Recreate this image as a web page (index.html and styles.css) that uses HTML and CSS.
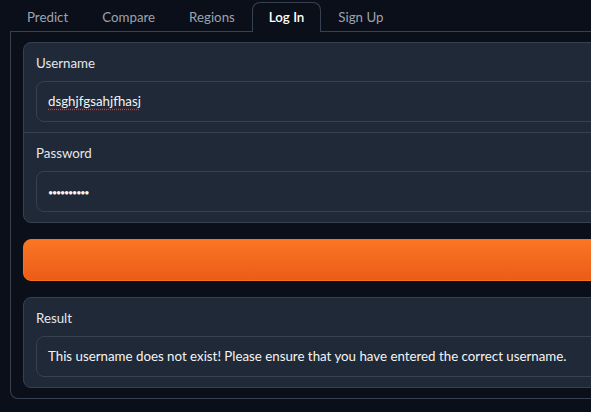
FILE: index.html
```html
<!DOCTYPE html>
<html lang="en">
<head>
<meta charset="utf-8">
<title>Log In</title>
<link rel="stylesheet" href="styles.css">
</head>
<body>
<div class="app">
  <div class="tabs">
    <nav class="tab-nav">
      <button class="tab">Predict</button>
      <button class="tab">Compare</button>
      <button class="tab">Regions</button>
      <button class="tab selected">Log In</button>
      <button class="tab">Sign Up</button>
    </nav>
    <div class="tab-panel">
      <div class="block form">
        <div class="field">
          <span class="label">Username</span>
          <div class="input"><span class="typed">dsghjfgsahjfhasj</span></div>
        </div>
        <div class="field divided">
          <span class="label">Password</span>
          <div class="input"><span class="dots">••••••••••</span></div>
        </div>
      </div>
      <button class="primary">Log In</button>
      <div class="block">
        <div class="field">
          <span class="label">Result</span>
          <div class="input">This username does not exist! Please ensure that you have entered the correct username.</div>
        </div>
      </div>
    </div>
  </div>
</div>
</body>
</html>
```

FILE: styles.css
```css
html, body {
  margin: 0;
  padding: 0;
  background: #0b0f19;
  overflow: hidden;
}
body {
  font-family: "Lato", "Noto Sans", sans-serif;
  font-size: 13.3px;
  line-height: 20px;
  color: #f3f4f6;
}
.app {
  width: 1400px;
  padding: 2px 0 0 10px;
}
.tab-nav {
  display: flex;
  border-bottom: 1px solid #374151;
}
.tab {
  font: inherit;
  background: transparent;
  color: #9ca3af;
  border: 1px solid transparent;
  border-bottom: none;
  padding: 4px 16px;
  margin: 0;
  border-radius: 8px 8px 0 0;
  cursor: pointer;
}
.tab.selected {
  color: #ffffff;
  font-weight: 600;
  border-color: #374151;
  background: #0b0f19;
  margin-bottom: -1px;
  padding-bottom: 5px;
}
.tab-panel {
  border: 1px solid #374151;
  border-top: none;
  border-radius: 0 0 8px 8px;
  padding: 10px 12px;
  display: flex;
  flex-direction: column;
  gap: 16px;
}
.block {
  background: #1f2937;
  border: 1px solid #374151;
  border-radius: 8px;
  overflow: hidden;
}
.field {
  padding: 10px 12px;
  display: flex;
  flex-direction: column;
  gap: 8px;
}
.field.divided {
  border-top: 1px solid #374151;
}
.label {
  color: #e5e7eb;
}
.input {
  border: 1px solid #374151;
  border-radius: 8px;
  background: #1f2937;
  padding: 10px 11px;
  line-height: 19px;
  height: 19px;
  color: #f3f4f6;
  white-space: nowrap;
}
.typed {
  text-decoration: underline dotted #d33b3b;
  text-underline-offset: 3px;
}
.dots {
  font-size: 9px;
  line-height: 10px;
  letter-spacing: -1.2px;
}
.primary {
  font: inherit;
  height: 42px;
  border: 1px solid #f97316;
  border-radius: 8px;
  background: linear-gradient(to bottom, #f97624, #ec5c17);
  color: #ffffff;
  font-weight: 600;
}
```
